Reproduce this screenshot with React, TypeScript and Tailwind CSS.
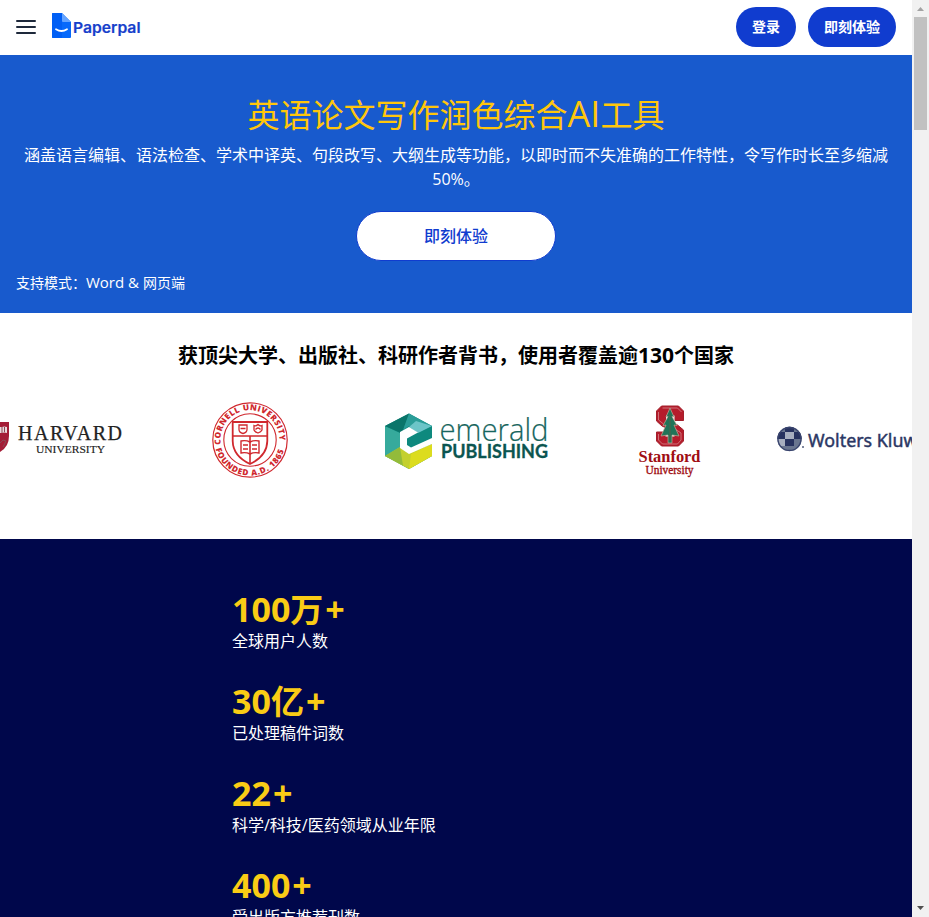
import React from "react";

const stats = [
  { num: "100", unit: "万", label: "全球用户人数" },
  { num: "30", unit: "亿", label: "已处理稿件词数" },
  { num: "22", unit: "", label: "科学/科技/医药领域从业年限" },
  { num: "400", unit: "", label: "受出版方推荐刊数" },
];

function PaperpalLogo() {
  return (
    <svg className="mb-0.5 ml-4 block h-[30px] w-[92px]" viewBox="52 12 92 30">
      <path d="M53 13h9l9 9v15q0 1-1 1H53q-1 0-1-1V14q0-1 1-1z" fill="#0669fb" />
      <path d="M52 14q0-1 1-1h9v25h-9q-1 0-1-1z" fill="#005ff5" />
      <path d="M62 13l9 9h-8q-1 0-1-1z" fill="#65a4ff" />
      <path d="M56 29.2q5.500 3.600 11 0" fill="none" stroke="#fff" strokeWidth="1.800" strokeLinecap="round" />
      <text x="73" y="33" textLength="67.500" lengthAdjust="spacingAndGlyphs" fontSize="15" fontWeight="600" fill="#173fcb" stroke="#173fcb" strokeWidth=".2" fontFamily="Inter, sans-serif">Paperpal</text>
    </svg>
  );
}

function Harvard() {
  return (
    <svg className="block h-20 w-[145px] shrink-0" viewBox="0 400 145 80">
      <path d="M-14 422H9v14q0 12-11 17q-12-5-12-17z" fill="#a41c36" />
      <path d="M-2 427h4q2-1 5 0v6q-3-1-5 0h-4z" fill="#eadadd" />
      <path d="M2 427v6M4.500 427v5M-1 444l4-4 3 1-3 6" fill="none" stroke="#8a4855" />
      <text x="18" y="440" textLength="104" lengthAdjust="spacing" fontSize="20" fill="#222" stroke="#222" strokeWidth=".25" fontFamily="'Liberation Serif', serif">HARVARD</text>
      <text x="36" y="453" textLength="69" lengthAdjust="spacingAndGlyphs" fontSize="11" fill="#222" stroke="#222" strokeWidth=".15" fontFamily="'Liberation Serif', serif">UNIVERSITY</text>
    </svg>
  );
}

function Cornell() {
  return (
    <svg className="block h-20 w-[210px] shrink-0" viewBox="145 400 210 80">
      <defs>
        <path id="sealTop" d="M221.300 446.500A29.500 29.500 0 1 1 278.700 446.500" />
        <path id="sealBottom" d="M214.900 446A35.600 35.600 0 0 0 285.100 446" />
      </defs>
      <g fill="none" stroke="#d0282e">
        <circle cx="250" cy="440" r="37.200" strokeWidth="1.200" />
        <circle cx="250" cy="440" r="26.200" strokeWidth="1.100" />
        <path d="M232.700 422H267.300V441Q267 456 250 464Q233 456 232.700 441Z" strokeWidth="1.800" fill="#fff" />
        <path d="M233 436H267M250 436V463" strokeWidth="1.600" />
        <path d="M239 425h8v4.500q0 3-4 4-4-1-4-4zM254 425.500q2 1 4-1 2 2 4 1v4.500q-1 2-4 3-3-1-4-3zM240.500 428.500h5M255.500 429.500q2.500-3 5 0" strokeWidth="1.300" />
        <path d="M241 441q5-1 9 1q4-2 9-1v12q-5-1-9 1q-4-2-9-1zM243 445h5M243 449h5M252 445h5M252 449h5" strokeWidth="1.400" />
      </g>
      <g fill="#d0282e" fontFamily="'Open Sans', sans-serif" fontWeight="800" fontSize="8.200">
        <text><textPath href="#sealTop" startOffset="2" textLength="98" lengthAdjust="spacing">CORNELL UNIVERSITY</textPath></text>
        <text><textPath href="#sealBottom" startOffset="3" textLength="92" lengthAdjust="spacing">FOUNDED A.D. 1865</textPath></text>
      </g>
    </svg>
  );
}

function Emerald() {
  return (
    <svg className="block h-20 w-[210px] shrink-0" viewBox="355 400 210 80">
      <path d="M385 426l24-12.500L432 426v30l-23 13-24-13z" fill="#0e897e" />
      <path d="M385 426l15 7v15l-15 8z" fill="#36aa9c" />
      <path d="M385 426l24-12.500-6 17-3 2z" fill="#0a756a" />
      <path d="M409 413.500L432 426l-12 4-11-4-6 4z" fill="#2a9d98" />
      <path d="M409 427l7-6 16 5-14 7z" fill="#6cc5c8" />
      <path d="M385 456l15-9 9 6 23-9v12l-23 13z" fill="#c3d02e" />
      <path d="M385 456l15-9 3 18.500z" fill="#93bb3a" />
      <path d="M409 469l2-15 21-10v12z" fill="#dcdc1e" />
      <path d="M400 432l9-5 9 5.500-11 6v6.500l4 2.500L432 438v6l-23 10-9-6z" fill="#fff" />
      <text x="439.500" y="441" textLength="109" lengthAdjust="spacingAndGlyphs" fontSize="31.500" fontWeight="300" fill="#17665e" stroke="#17665e" strokeWidth=".2" fontFamily="'Open Sans', sans-serif">emerald</text>
      <text x="441" y="457.500" textLength="107" lengthAdjust="spacingAndGlyphs" fontSize="18.500" fontWeight="700" fill="#0b5550" stroke="#0b5550" strokeWidth=".3" fontFamily="Lato, sans-serif">PUBLISHING</text>
    </svg>
  );
}

function Stanford() {
  return (
    <svg className="block h-20 w-[205px] shrink-0" viewBox="565 400 205 80">
      <path d="M661.500 406h17l5 5v9.500h-8.500v-5.500h-9.500v5l12 5 6 5v11l-5 5h-17l-5-5v-9h8.500v5h10v-5l-13-6-5.500-5v-10z" fill="#b51c2b" stroke="#a3202c" />
      <path d="M662.500 408h15l4 4M658.500 412v8l5 4M675 429l6 4v7l-3.500 4h-15l-4-4v-6" fill="none" stroke="#d9979b" strokeWidth=".7" />
      <path d="M670 408l4 9-2-.5 5 9-3-.5 5 11-7-1v8h-4v-8l-7 1 5-11-3 .5 5-9-2 .5z" fill="#217458" stroke="#c3a893" strokeWidth=".7" />
      <path d="M670 415v26" stroke="#5d6147" strokeWidth=".8" />
      <text x="638.500" y="462" textLength="62" lengthAdjust="spacingAndGlyphs" fontSize="17.500" fontWeight="bold" fill="#a00d12" fontFamily="'Liberation Serif', serif">Stanford</text>
      <text x="645.500" y="473.500" textLength="48" lengthAdjust="spacingAndGlyphs" fontSize="11.500" fill="#a00d12" stroke="#a00d12" strokeWidth=".35" fontFamily="'Liberation Serif', serif">University</text>
    </svg>
  );
}

function WoltersKluwer() {
  return (
    <svg className="block h-20 w-[205px] shrink-0" viewBox="770 400 205 80">
      <defs>
        <clipPath id="globe"><circle cx="789.500" cy="439" r="12.200" /></clipPath>
      </defs>
      <g clipPath="url(#globe)">
        <path d="M777 426h25v25h-25z" fill="#69758f" />
        <path d="M785 426h9v6h-9zM777 432h8v7h-8zM785 439h9v7h-9zM794 432h9v7h-9z" fill="#27325f" />
        <path d="M785 432h9v7h-9zM777 439h8v7h-8z" fill="#a7aebf" />
      </g>
      <circle cx="789.500" cy="439" r="11.500" fill="none" stroke="#39446e" strokeWidth="1.300" />
      <circle cx="803" cy="447" r="1" fill="#56607f" />
      <text x="808" y="447" textLength="127" lengthAdjust="spacingAndGlyphs" fontSize="18.500" fontWeight="400" fill="#2b3764" stroke="#2b3764" strokeWidth=".45" fontFamily="'Noto Sans', sans-serif">Wolters Kluwer</text>
    </svg>
  );
}

export default function App() {
  return (
    <div className="flex h-[917px] w-[929px] overflow-hidden bg-white font-['Open_Sans','Noto_Sans_CJK_SC',sans-serif]">
      <main className="w-[912px] shrink-0 overflow-hidden">
        <header className="flex h-[55px] items-center bg-white pr-4 pl-4">
          <button aria-label="菜单" className="mb-0.5 flex w-5 flex-col gap-1">
            <span className="h-0.5 rounded bg-[#1e293b]" />
            <span className="h-0.5 rounded bg-[#1e293b]" />
            <span className="h-0.5 rounded bg-[#1e293b]" />
          </button>
          <PaperpalLogo />
          <div className="mb-0.5 ml-auto flex gap-3 text-sm font-bold text-white">
            <button className="h-10 w-[60px] rounded-full bg-[#103ccf]">登录</button>
            <button className="h-10 w-[88px] rounded-full bg-[#103ccf]">即刻体验</button>
          </div>
        </header>

        <section className="flex h-[258px] flex-col bg-[#185acd] px-4 pt-10 text-center text-white">
          <h1 className="h-10 text-[32px] leading-10 text-[#ffc60b]">
            英语论文写作润色综合<span className="text-[36px] leading-8">AI</span>工具
          </h1>
          <p className="mt-2 text-base leading-6">
            涵盖语言编辑、语法检查、学术中译英、句段改写、大纲生成等功能，以即时而不失准确的工作特性，令写作时长至多缩减50%。
          </p>
          <button className="mx-auto mt-5 h-[50px] w-[200px] rounded-full border border-[#103ccf] bg-white font-medium text-[#103ccf]">即刻体验</button>
          <p className="mt-[11px] text-left text-sm leading-5">支持模式：<span className="text-[15px]">Word &amp; </span>网页端</p>
        </section>

        <section className="h-[226px] bg-white pt-7">
          <h2 className="text-center text-xl leading-[30px] font-bold text-black">获顶尖大学、出版社、科研作者背书，使用者覆盖逾<span className="text-[21px] leading-5">130</span>个国家</h2>
          <div className="mt-[29px] flex">
            <Harvard />
            <Cornell />
            <Emerald />
            <Stanford />
            <WoltersKluwer />
          </div>
        </section>

        <section className="flex h-[420px] flex-col gap-7 bg-[#00074b] pt-[50px] pl-[232px]">
          {stats.map((item) => (
            <div key={item.label} className="h-16">
              <div className="h-10 text-[34px] leading-10 font-bold text-[#facc15]">
                {item.num}<span className="text-[33px]">{item.unit}</span><span className="ml-0.5">+</span>
              </div>
              <div className="text-base leading-6 text-white">{item.label}</div>
            </div>
          ))}
        </section>
      </main>

      <aside className="flex w-[17px] shrink-0 flex-col items-center bg-[#f1f1f1]">
        <svg className="h-[17px] w-[17px] shrink-0" viewBox="0 0 17 17"><path d="M5 11h7L8.500 7z" fill="#a3a3a3" /></svg>
        <div className="h-[113px] w-[13px] bg-[#c1c1c1]" />
        <svg className="mt-auto h-[17px] w-[17px] shrink-0" viewBox="0 0 17 17"><path d="M5 6h7L8.500 10z" fill="#505050" /></svg>
      </aside>
    </div>
  );
}
